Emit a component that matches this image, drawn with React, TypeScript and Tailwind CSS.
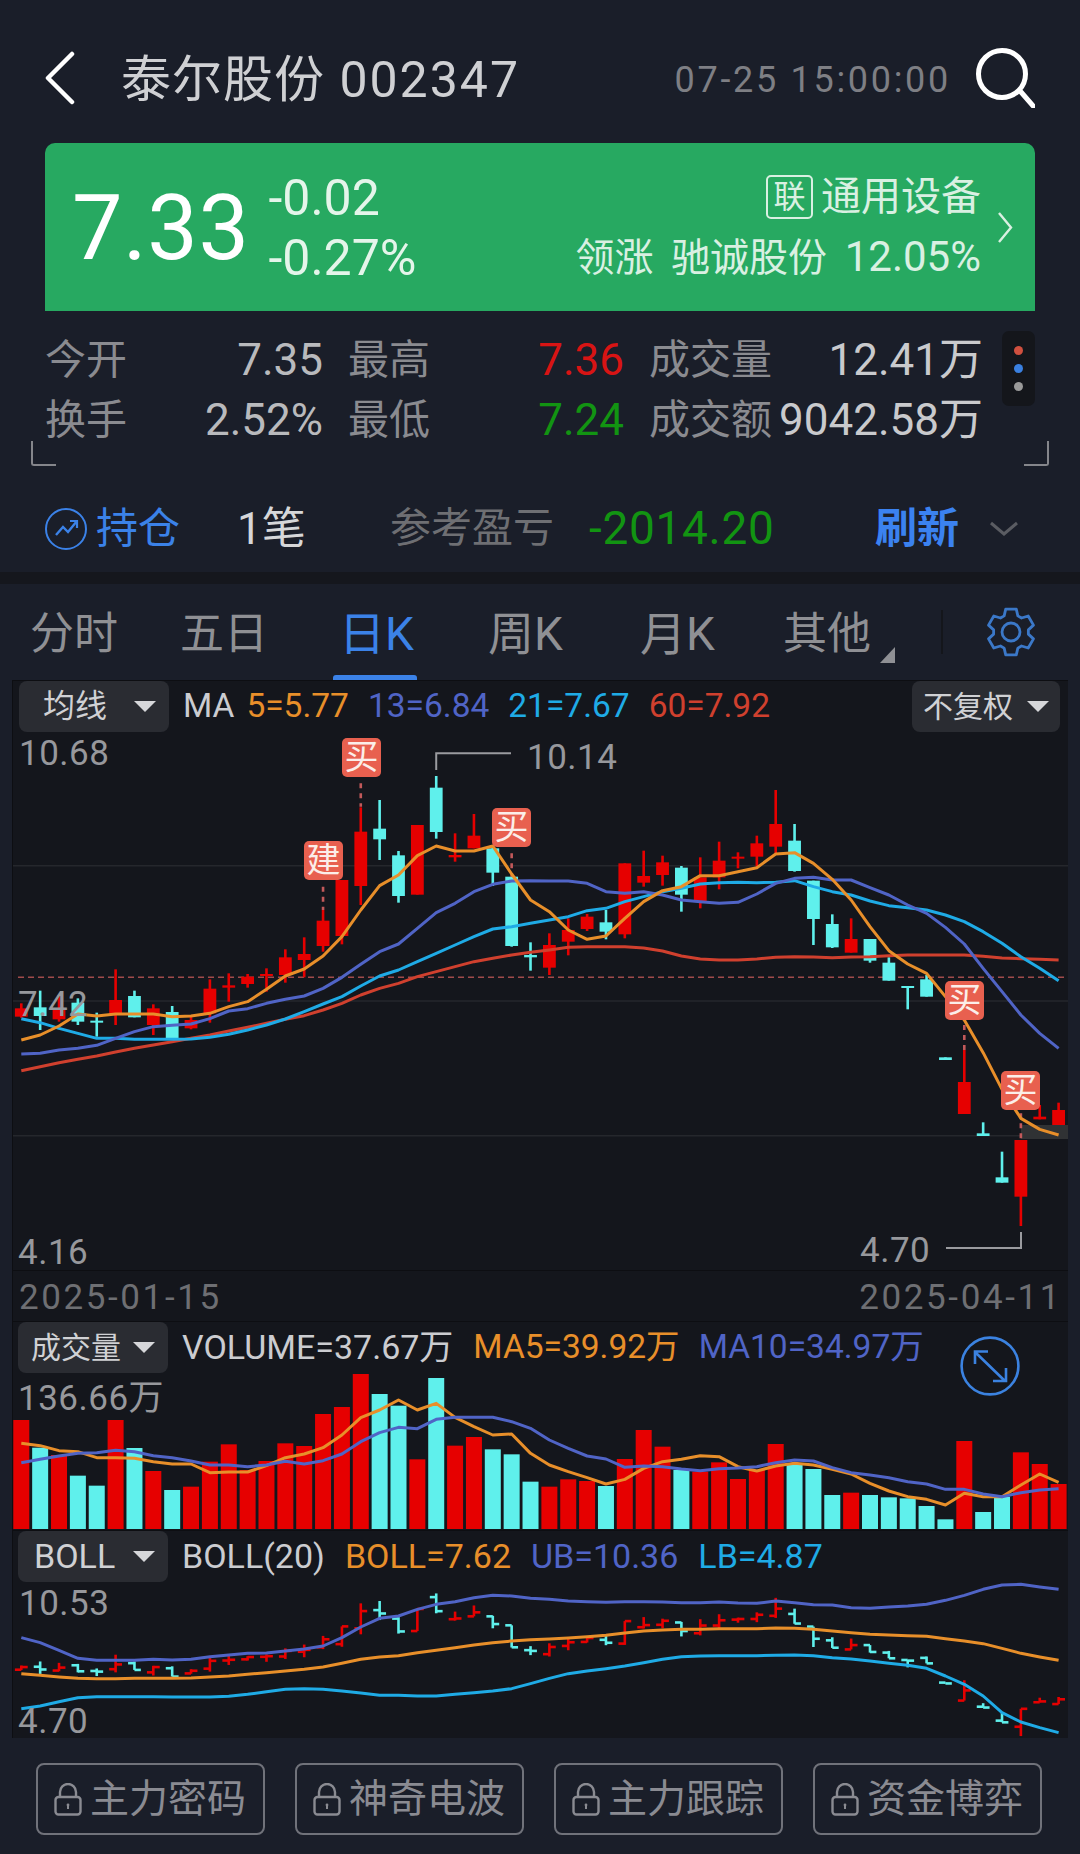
// y values below are sampled in thirds of a pixel, x comes from the candle index
const X = (i: number) => 8.3 + 18.86 * i;

type Candle = ['r' | 'c', number, number, number, number];

const candles: Candle[] = [
  ['r', 850, 865, 890, 893], ['c', 812, 862, 888, 930], ['r', 825, 870, 898, 905], ['c', 835, 848, 905, 915],
  ['c', 878, 902, 908, 950], ['r', 748, 840, 885, 915], ['c', 812, 828, 892, 892], ['r', 853, 865, 915, 945],
  ['c', 858, 876, 955, 955], ['r', 885, 900, 925, 928], ['r', 778, 806, 880, 908], ['r', 760, 796, 803, 845],
  ['r', 762, 770, 792, 803], ['r', 745, 762, 768, 815], ['r', 688, 712, 765, 788], ['r', 652, 702, 720, 772],
  ['r', 570, 602, 678, 695], ['r', 480, 480, 648, 673], ['r', 262, 335, 498, 555], ['c', 240, 326, 358, 420],
  ['c', 393, 406, 528, 548], ['r', 315, 315, 524, 524], ['c', 168, 203, 336, 356], ['r', 340, 405, 412, 425],
  ['r', 282, 347, 385, 385], ['c', 380, 385, 458, 498], ['c', 470, 470, 678, 680], ['c', 667, 705, 712, 752],
  ['r', 640, 675, 743, 765], ['r', 595, 630, 665, 706], ['r', 582, 590, 627, 633], ['c', 570, 607, 635, 658],
  ['r', 430, 430, 643, 655], ['r', 392, 468, 488, 500], ['r', 407, 427, 465, 497], ['c', 438, 443, 524, 575],
  ['r', 412, 472, 545, 565], ['r', 365, 422, 472, 508], ['r', 397, 410, 416, 445], ['r', 347, 370, 410, 440],
  ['r', 210, 312, 380, 400], ['c', 312, 362, 453, 455], ['c', 482, 482, 597, 675], ['c', 583, 612, 682, 684],
  ['r', 595, 657, 698, 698], ['c', 657, 657, 722, 728], ['c', 712, 728, 782, 782], ['c', 798, 798, 804, 868],
  ['c', 765, 778, 830, 830], ['c', 1012, 1012, 1020, 1020], ['r', 990, 1086, 1182, 1182], ['c', 1207, 1240, 1248, 1248],
  ['c', 1295, 1372, 1388, 1388], ['r', 1260, 1260, 1430, 1518], ['r', 1155, 1190, 1198, 1198], ['r', 1148, 1170, 1215, 1215],
];

const ma5 = [960, 945, 918, 882, 888, 882, 882, 882, 890, 888, 880, 860, 845, 808, 768, 747, 708, 650, 570, 497, 465, 407, 378, 393, 393, 378, 462, 540, 575, 630, 658, 648, 595, 545, 512, 500, 467, 467, 455, 443, 402, 398, 430, 478, 540, 620, 692, 732, 760, 830, 900, 998, 1108, 1195, 1228, 1245];
const ma13 = [1002, 1000, 990, 985, 976, 955, 935, 920, 916, 912, 896, 873, 866, 850, 838, 828, 805, 772, 733, 695, 672, 625, 578, 550, 515, 493, 483, 482, 483, 483, 490, 515, 520, 515, 525, 540, 545, 550, 547, 522, 490, 475, 472, 480, 480, 503, 525, 555, 580, 622, 672, 745, 815, 885, 940, 985];
const ma21 = [896, 908, 925, 940, 955, 955, 958, 958, 958, 957, 952, 943, 930, 915, 897, 875, 852, 830, 798, 768, 750, 725, 700, 675, 650, 627, 620, 610, 600, 590, 572, 565, 545, 530, 515, 505, 492, 488, 487, 488, 487, 482, 500, 515, 525, 543, 557, 563, 570, 585, 605, 635, 670, 710, 745, 782];
const ma60 = [1052, 1040, 1028, 1018, 1008, 996, 985, 975, 965, 955, 945, 933, 922, 910, 898, 887, 870, 850, 825, 805, 790, 770, 755, 740, 725, 715, 705, 697, 690, 682, 680, 680, 680, 684, 693, 708, 717, 720, 720, 717, 712, 710, 711, 713, 711, 710, 707, 705, 705, 705, 705, 709, 714, 716, 718, 720];

const volTops = [360, 443, 465, 527, 557, 360, 444, 513, 570, 560, 485, 433, 510, 483, 430, 438, 342, 321, 222, 282, 317, 478, 234, 437, 411, 448, 463, 545, 560, 538, 543, 558, 477, 390, 440, 510, 515, 487, 537, 510, 432, 495, 507, 585, 578, 585, 592, 595, 618, 658, 423, 636, 590, 457, 492, 552];
const volMa5 = [430, 437, 452, 455, 473, 473, 475, 485, 492, 492, 518, 516, 516, 497, 473, 462, 443, 405, 353, 330, 300, 330, 310, 352, 380, 405, 402, 460, 495, 515, 533, 552, 538, 505, 485, 478, 467, 470, 500, 513, 498, 490, 495, 508, 522, 550, 573, 590, 598, 615, 580, 590, 590, 555, 522, 547];
const volMa10 = [488, 478, 468, 460, 458, 451, 455, 467, 473, 483, 495, 495, 500, 495, 484, 492, 482, 462, 425, 398, 382, 386, 358, 352, 352, 352, 365, 385, 420, 445, 468, 477, 502, 498, 500, 507, 512, 506, 504, 500, 488, 480, 483, 503, 518, 525, 533, 545, 552, 568, 568, 582, 590, 578, 570, 566];

const bollUp = [290, 305, 328, 352, 358, 358, 358, 355, 357, 355, 347, 342, 337, 336, 330, 324, 315, 290, 258, 232, 225, 205, 190, 182, 170, 163, 165, 172, 175, 180, 182, 184, 182, 182, 183, 185, 185, 183, 186, 187, 180, 185, 191, 192, 200, 202, 198, 195, 190, 178, 163, 145, 132, 130, 138, 145];
const bollMid = [398, 403, 408, 412, 413, 413, 412, 412, 412, 411, 408, 405, 400, 395, 390, 385, 378, 367, 355, 348, 344, 335, 328, 320, 312, 305, 300, 296, 294, 291, 287, 283, 276, 270, 267, 265, 265, 263, 263, 263, 261, 262, 265, 270, 275, 280, 282, 284, 286, 293, 300, 308, 322, 337, 348, 358];
const bollLow = [503, 495, 482, 470, 467, 467, 467, 467, 468, 468, 468, 466, 460, 452, 445, 443, 445, 450, 456, 463, 463, 465, 465, 460, 455, 450, 443, 428, 412, 398, 390, 383, 375, 365, 355, 347, 345, 344, 344, 344, 343, 342, 344, 350, 354, 360, 367, 373, 382, 405, 430, 465, 515, 543, 560, 575];

const ORANGE = '#e88f2a';
const PURPLE = '#5064c6';
const CYAN = '#1fabe6';
const RED = '#d0402e';
const UP = '#e60000';
const DOWN = '#5ff0ec';

function Line({ data, off, color }: { data: number[]; off: number; color: string }) {
  const points = data.map((v, i) => `${X(i)},${off + v / 3}`).join(' ');
  return <polyline points={points} fill="none" stroke={color} strokeWidth={3} strokeLinejoin="round" />;
}

function Caret() {
  return (
    <svg width="24" height="13" viewBox="0 0 24 13" className="shrink-0">
      <polygon points="1,1 23,1 12,12" fill="#d6d7da" />
    </svg>
  );
}

// six flat teeth, top tooth pointing straight up
function Gear({ className }: { className?: string }) {
  const polar = (r: number, deg: number) => {
    const a = (deg * Math.PI) / 180;
    return `${(25 + r * Math.cos(a)).toFixed(2)} ${(25 + r * Math.sin(a)).toFixed(2)}`;
  };
  const parts: string[] = [];
  for (let k = 0; k < 6; k++) {
    const a = -90 + 60 * k;
    parts.push(polar(17.5, a - 23), polar(23.5, a - 13), polar(23.5, a + 13), polar(17.5, a + 23));
  }
  return (
    <svg width="50" height="50" viewBox="0 0 50 50" fill="none" stroke="#3b78c8" strokeWidth="2.8" strokeLinejoin="round" className={className}>
      <path d={`M${parts.join('L')}Z`} />
      <circle cx="25" cy="25" r="9" />
    </svg>
  );
}

function Tag({ text, x, y }: { text: string; x: number; y: number }) {
  return (
    <div
      className="absolute flex h-[39px] w-[39px] items-center justify-center rounded-[5px] bg-[#e8604f] text-[34px] text-[#fbeee9]"
      style={{ left: x, top: y }}
    >
      {text}
    </div>
  );
}

function Label({ text, x, y, className }: { text: string; x: number; y: number; className?: string }) {
  return (
    <div
      className={`absolute h-[40px] text-[35px] leading-[40px] tracking-[0.5px] text-[#97989c] ${className ?? ''}`}
      style={{ left: x, top: y - 18 }}
    >
      {text}
    </div>
  );
}

function MainChart() {
  const off = 39;
  const conn: [number, number, number][] = [
    [16, 500, 570], [18, 190, 260], [26, 400, 470], [50, 915, 990], [53, 1180, 1260],
  ];
  return (
    <svg width="1055" height="589" className="absolute left-0 top-0">
      {[865.7, 1001, 1135.7].map(y => (
        <line key={y} x1="0" x2="1055" y1={y - 681} y2={y - 681} stroke="#25272c" strokeWidth="1.5" />
      ))}
      <line x1="5" x2="1055" y1={off + 772 / 3} y2={off + 772 / 3} stroke="#a04b4b" strokeWidth="1.5" strokeDasharray="6 4" />
      <rect x="1008" y="444" width="47" height="14" fill="#303234" />
      {candles.map(([c, hi, top, bot, lo], i) => (
        <g key={i} fill={c === 'r' ? UP : DOWN}>
          <rect x={X(i) - 1.3} y={off + hi / 3} width="2.6" height={(lo - hi) / 3} />
          <rect x={X(i) - 6.4} y={off + top / 3} width="12.8" height={(bot - top) / 3} />
        </g>
      ))}
      {conn.map(([i, a, b]) => (
        <line key={i} x1={X(i)} x2={X(i)} y1={off + a / 3} y2={off + b / 3} stroke="#c2595a" strokeWidth="2.6" strokeDasharray="5 5" />
      ))}
      <Line data={ma60} off={off} color={RED} />
      <Line data={ma21} off={off} color={CYAN} />
      <Line data={ma13} off={off} color={PURPLE} />
      <Line data={ma5} off={off} color={ORANGE} />
      <polyline points={`${X(22)},${off + 150 / 3} ${X(22)},${off + 100 / 3} 498,${off + 100 / 3}`} fill="none" stroke="#9a9b9f" strokeWidth="2" />
      <polyline points="933,567 1008,567 1008,551" fill="none" stroke="#9a9b9f" strokeWidth="2" />
    </svg>
  );
}

function VolumeChart() {
  const off = -22;
  return (
    <svg width="1055" height="208" className="absolute left-0 top-0">
      {volTops.map((v, i) => (
        <rect key={i} x={X(i) - 8} y={off + v / 3} width="16" height={(687 - v) / 3} fill={candles[i][0] === 'r' ? UP : DOWN} />
      ))}
      <Line data={volMa5} off={off} color={ORANGE} />
      <Line data={volMa10} off={off} color={PURPLE} />
    </svg>
  );
}

function BollChart() {
  const off = 10;
  // same price series as the main chart, redrawn as thin OHLC bars
  const m = (v: number) => off + (104 + 0.317 * v) / 3;
  return (
    <svg width="1055" height="208" className="absolute left-0 top-0">
      {candles.map(([c, hi, top, bot, lo], i) => {
        const open = c === 'r' ? bot : top;
        const close = c === 'r' ? top : bot;
        return (
          <g key={i} stroke={c === 'r' ? UP : DOWN} strokeWidth="2.6">
            <line x1={X(i)} x2={X(i)} y1={m(hi)} y2={m(lo)} />
            <line x1={X(i) - 6.4} x2={X(i)} y1={m(open)} y2={m(open)} />
            <line x1={X(i)} x2={X(i) + 6.4} y1={m(close)} y2={m(close)} />
          </g>
        );
      })}
      <Line data={bollUp} off={off} color={PURPLE} />
      <Line data={bollMid} off={off} color={ORANGE} />
      <Line data={bollLow} off={off} color={CYAN} />
    </svg>
  );
}

function PickerButton({ text, className }: { text: string; className?: string }) {
  return (
    <div className={`flex h-[51px] w-[150px] shrink-0 items-center justify-between rounded-[8px] bg-[#2a2c32] pr-[12px] text-[#d0d1d4] ${className ?? ''}`}>
      <span>{text}</span>
      <Caret />
    </div>
  );
}

function LockButton({ text }: { text: string }) {
  return (
    <div className="flex h-[72px] w-[229px] items-center gap-[8px] rounded-[8px] border-2 border-[#70727a] pl-[16px] text-[39px] text-[#8a8b92]">
      <svg width="28" height="33" viewBox="0 0 28 33" fill="none" stroke="#8a8b92" strokeWidth="2.4">
        <path d="M6 14V9a8 8 0 0 1 16 0v5" />
        <rect x="1.5" y="14" width="25" height="17.5" rx="3" />
        <circle cx="14" cy="22" r="1.4" fill="#8a8b92" stroke="none" />
        <rect x="13" y="22" width="2" height="4" fill="#8a8b92" stroke="none" />
      </svg>
      <span>{text}</span>
    </div>
  );
}

const tabs = [
  { text: '分时', left: 30, cls: '' },
  { text: '五日', left: 180, cls: '' },
  { text: '日K', left: 339, cls: 'text-[46px] text-[#3b82e8]' },
  { text: '周K', left: 488, cls: 'text-[46px]' },
  { text: '月K', left: 640, cls: 'text-[46px]' },
  { text: '其他', left: 783, cls: '' },
];

export default function App() {
  return (
    <div className="relative h-[1854px] w-[1080px] overflow-hidden bg-[#1a1e29] [font-family:Roboto,'Noto_Sans_CJK_SC',sans-serif]">
      {/* title bar */}
      <div className="flex h-[143px] items-start justify-between px-[45px] pt-[48px]">
        <div className="flex h-[60px] items-center">
          <svg width="30" height="54" viewBox="0 0 30 54" fill="none" stroke="#ffffff" strokeWidth="4.5" strokeLinecap="round" strokeLinejoin="round">
            <path d="M27 3 3 27l24 24" />
          </svg>
          <div className="ml-[46px] pt-[4px] text-[50px] tracking-[1px] text-[#cfd0d3]">
            泰尔股份<span className="tracking-[2px]"> 002347</span>
          </div>
        </div>
        <div className="flex h-[60px] items-center">
          <div className="pt-[4px] text-[36px] tracking-[2.7px] text-[#7e7f84]">07-25 15:00:00</div>
          <svg width="60" height="60" viewBox="0 0 60 60" fill="none" stroke="#ffffff" strokeWidth="5" strokeLinecap="round" className="ml-[24px]">
            <circle cx="27" cy="26" r="23.5" />
            <path d="M46 44l13 15" />
          </svg>
        </div>
      </div>

      {/* quote card */}
      <div className="mx-[45px] flex h-[168px] items-center rounded-t-[10px] bg-[#27a961] pl-[27px] pr-[22px]">
        <div className="pt-[4px] text-[90px] leading-none tracking-[0.5px] text-white">7.33</div>
        <div className="ml-[19px] flex flex-col gap-[16px] pt-[2px] text-[50px] leading-[44px] text-[#e4f5ea]">
          <div>-0.02</div>
          <div>-0.27%</div>
        </div>
        <div className="ml-auto flex flex-col items-end gap-[16px] text-[#d9f0e2]">
          <div className="flex h-[44px] items-center gap-[8px] text-[40px]">
            <span className="flex h-[44px] w-[47px] items-center justify-center rounded-[5px] border-2 border-[#d9f0e2] text-[32px]">联</span>
            <span>通用设备</span>
          </div>
          <div className="text-[39px] leading-[44px] [word-spacing:8px]">
            领涨 驰诚股份 <span className="text-[42px]">12.05%</span>
          </div>
        </div>
        <svg width="16" height="31" viewBox="0 0 16 31" fill="none" stroke="#d9f0e2" strokeWidth="2.4" className="ml-[16px]">
          <path d="M2 1l12 14.5L2 30" />
        </svg>
      </div>

      {/* stats */}
      <div className="flex pl-[45px] pt-[19px] text-[41px] leading-[60px]">
        <div className="flex flex-col">
          {[
            ['今开', '7.35', '最高', '7.36', 'text-[#d81414]', '成交量', '12.41万'],
            ['换手', '2.52%', '最低', '7.24', 'text-[#129412]', '成交额', '9042.58万'],
          ].map(row => (
            <div key={row[0]} className="flex h-[60px]">
              <div className="flex w-[278px] justify-between">
                <span className="text-[#8a8b90]">{row[0]}</span>
                <span className="text-[44px] text-[#b9babd]">{row[1]}</span>
              </div>
              <div className="ml-[25px] flex w-[276px] justify-between">
                <span className="text-[#8a8b90]">{row[2]}</span>
                <span className={`text-[44px] ${row[4]}`}>{row[3]}</span>
              </div>
              <div className="ml-[25px] flex w-[334px] justify-between">
                <span className="text-[#8a8b90]">{row[5]}</span>
                <span className="text-[44px] text-[#c9cacd]">{row[6]}</span>
              </div>
            </div>
          ))}
        </div>
        <div className="ml-[19px] mt-[1px] flex h-[75px] w-[33px] flex-col items-center justify-center gap-[9px] rounded-[7px] bg-[#14161b]">
          <span className="h-[9px] w-[9px] rounded-full bg-[#d0503f]" />
          <span className="h-[9px] w-[9px] rounded-full bg-[#3a80e0]" />
          <span className="h-[9px] w-[9px] rounded-full bg-[#9a9a9a]" />
        </div>
      </div>
      <div className="-mt-[9px] flex h-[25px] justify-between px-[31px]">
        <div className="h-[25px] w-[25px] rounded-bl-[3px] border-b-2 border-l-2 border-[#85868b]" />
        <div className="h-[25px] w-[25px] rounded-br-[3px] border-b-2 border-r-2 border-[#85868b]" />
      </div>

      {/* position row */}
      <div className="relative flex h-[106px] items-center pt-[19px] text-[41px]">
        <svg width="42" height="42" viewBox="0 0 42 42" fill="none" stroke="#3b82e8" strokeWidth="2" className="ml-[45px]">
          <circle cx="21" cy="21" r="20" />
          <path d="M11 27l7-8 5 5 9-11" strokeWidth="2.4" />
          <path d="M25 13h7v7" strokeWidth="2.2" />
        </svg>
        <span className="ml-[9px] w-[141px] text-[42px] text-[#3b82e8]">持仓</span>
        <span className="w-[153px] text-[44px] text-[#d6d7d9]">1笔</span>
        <span className="w-[199px] text-[#6e6f73]">参考盈亏</span>
        <span className="w-[286px] text-[46px] tracking-[0.7px] text-[#129412]">-2014.20</span>
        <span className="text-[42px] font-bold text-[#3b82f0]">刷新</span>
        <svg width="30" height="15" viewBox="0 0 30 15" fill="none" stroke="#5a5c62" strokeWidth="3" className="ml-[30px]">
          <path d="M2 2l13 11L28 2" />
        </svg>
      </div>

      <div className="h-[12px] bg-[#15171d]" />

      {/* period tabs */}
      <div className="relative flex h-[96px] items-center text-[44px] text-[#8f9094]">
        {tabs.map(t => (
          <div key={t.text} className={`absolute top-[21px] leading-[58px] ${t.cls}`} style={{ left: t.left }}>
            {t.text}
          </div>
        ))}
        <div className="absolute bottom-0 left-[333px] h-[5px] w-[84px] rounded-t-[3px] bg-[#3b82e8]" />
        <svg width="15" height="16" viewBox="0 0 15 16" className="absolute left-[880px] top-[63px]">
          <polygon points="15,0 15,16 0,16" fill="#8f9094" />
        </svg>
        <div className="absolute left-[941px] top-[26px] h-[44px] w-[2px] bg-[#14161b]" />
        <Gear className="absolute left-[986px] top-[23px]" />
      </div>

      {/* chart panels */}
      <div className="ml-[12px] w-[1056px] border-l border-t border-[#0d0e12] bg-[#14161c]">
        <div className="relative h-[589px]">
          <MainChart />
          <div className="relative flex h-[51px] items-center pl-[6px] text-[33.5px]">
            <PickerButton text="均线" className="-mt-[1px] pl-[24px] text-[32px]" />
            <span className="ml-[14px] text-[#cbccd0]">MA</span>
            <span className="ml-[12px] text-[#e88f2a]">5=5.77</span>
            <span className="ml-[19px] text-[#5064c6]">13=6.84</span>
            <span className="ml-[19px] text-[#1fabe6]">21=7.67</span>
            <span className="ml-[19px] text-[#d0402e]">60=7.92</span>
            <div className="-mt-[1px] ml-auto mr-[8px] flex h-[51px] w-[148px] items-center justify-between rounded-[8px] bg-[#2a2c32] pl-[11px] pr-[10px] text-[30px] text-[#d0d1d4]">
              <span>不复权</span>
              <Caret />
            </div>
          </div>
          <Label text="10.68" x={6} y={71} />
          <Label text="10.14" x={514} y={75} />
          <Label text="7.42" x={5} y={322} />
          <Label text="4.16" x={5} y={570} />
          <Label text="4.70" x={847} y={568} />
          <Tag text="买" x={329} y={57} />
          <Tag text="建" x={291} y={160} />
          <Tag text="买" x={479} y={127} />
          <Tag text="买" x={932} y={300} />
          <Tag text="买" x={988} y={390} />
        </div>

        <div className="flex h-[52px] items-center justify-between border-y border-[#0d0e12] pl-[6px] pr-[6px] pt-[4px] text-[35px] tracking-[2.6px] text-[#6e6f73]">
          <span>2025-01-15</span>
          <span>2025-04-11</span>
        </div>

        <div className="relative h-[208px]">
          <VolumeChart />
          <div className="relative flex h-[51px] items-center pl-[5px] text-[33.5px]">
            <PickerButton text="成交量" className="pl-[13px] text-[30px]" />
            <span className="ml-[14px] text-[34px] text-[#cbccd0]">VOLUME=37.67万</span>
            <span className="ml-[20px] text-[#e88f2a]">MA5=39.92万</span>
            <span className="ml-[19px] text-[#5064c6]">MA10=34.97万</span>
          </div>
          <Label text="136.66万" x={5} y={75} />
          <svg width="60" height="60" viewBox="0 0 60 60" fill="none" stroke="#3b82e0" strokeWidth="2.6" className="absolute left-[947px] top-[14px]">
            <circle cx="30" cy="30" r="28.4" />
            <path d="M15 16l30 29M15 28V15.5h13M46 32v13H33" />
          </svg>
        </div>

        <div className="relative h-[208px] border-t border-[#0d0e12]">
          <BollChart />
          <div className="relative flex h-[51px] items-center pl-[5px] text-[34px]">
            <PickerButton text="BOLL" className="pl-[16px]" />
            <span className="ml-[14px] text-[#cbccd0]">BOLL(20)</span>
            <span className="ml-[20px] text-[#e88f2a]">BOLL=7.62</span>
            <span className="ml-[20px] text-[#5064c6]">UB=10.36</span>
            <span className="ml-[20px] text-[#1fabe6]">LB=4.87</span>
          </div>
          <Label text="10.53" x={6} y={71} />
          <Label text="4.70" x={5} y={189} />
        </div>
      </div>

      {/* locked tools */}
      <div className="flex gap-[30px] pl-[36px] pt-[25px]">
        <LockButton text="主力密码" />
        <LockButton text="神奇电波" />
        <LockButton text="主力跟踪" />
        <LockButton text="资金博弈" />
      </div>
    </div>
  );
}
